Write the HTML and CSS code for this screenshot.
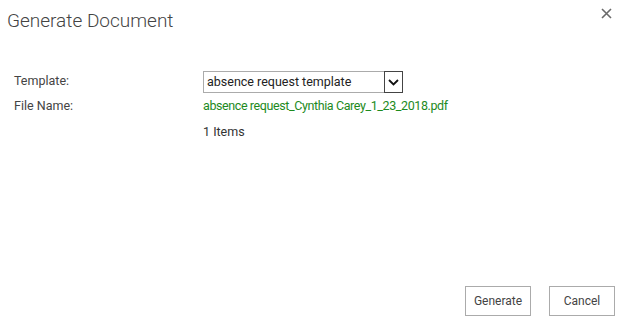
FILE: index.html
```html
<!DOCTYPE html>
<html>
<head>
<meta charset="utf-8">
<link rel="stylesheet" href="styles.css">
</head>
<body>
<div class="dialog">
  <div class="header">
    <h1 class="title">Generate Document</h1>
    <button class="close" aria-label="Close">
      <svg width="11" height="11" viewBox="0 0 11 11"><path d="M1 1 L10 10 M10 1 L1 10" stroke="#6a6a6a" stroke-width="1.6" fill="none"/></svg>
    </button>
  </div>
  <div class="form">
    <div class="label">Template:</div>
    <div class="field">
      <div class="select">
        <span class="select-text">absence request template</span>
        <span class="select-btn">
          <svg width="11" height="7" viewBox="0 0 11 7"><path d="M1 1 L5.5 5.5 L10 1" stroke="#111" stroke-width="1.8" fill="none"/></svg>
        </span>
      </div>
    </div>
    <div class="label">File Name:</div>
    <div class="field"><span class="filename">absence request_Cynthia Carey_1_23_2018.pdf</span></div>
    <div class="label"></div>
    <div class="field items">1 Items</div>
  </div>
  <div class="footer">
    <button class="btn">Generate</button>
    <button class="btn">Cancel</button>
  </div>
</div>
</body>
</html>
```
FILE: styles.css
```css
html, body {
  margin: 0;
  padding: 0;
  background: #fff;
}
body {
  font-family: "Roboto", "Open Sans", sans-serif;
  color: #444;
}
.dialog {
  height: 330px;
  display: flex;
  flex-direction: column;
  box-sizing: border-box;
}
.header {
  display: flex;
  justify-content: space-between;
  align-items: flex-start;
  padding: 8px 31px 0 7px;
}
.title {
  margin: 0;
  font-weight: 300;
  font-size: 19px;
  line-height: 26px;
  color: #444;
}
.close {
  border: 0;
  background: none;
  padding: 0;
  width: 11px;
  height: 11px;
  display: block;
}
.close svg { display: block; }
.form {
  display: grid;
  grid-template-columns: 189px auto;
  padding: 36px 0 0 14px;
  font-size: 12.5px;
}
.label {
  color: #444;
  height: 26px;
  line-height: 26px;
}
.label:first-child {
  height: 22px;
  line-height: 20px;
  margin-top: 1px;
}
.field {
  height: 26px;
  line-height: 26px;
}
.form > .field:nth-child(2) {
  height: 22px;
  margin-top: 1px;
}
.select {
  width: 200px;
  height: 22px;
  box-sizing: border-box;
  border: 1px solid #ababab;
  display: flex;
  align-items: stretch;
  line-height: 20px;
  color: #222;
}
.select-text {
  flex: 1;
  padding-left: 3px;
}
.select-btn {
  width: 17px;
  border: 1px solid #444;
  margin: -1px -1px -1px 0;
  display: flex;
  align-items: center;
  justify-content: center;
  background: #fff;
}
.select-btn svg { display: block; }
.filename {
  color: #1d8a1d;
  letter-spacing: -0.4px;
}
.items {
  color: #333;
}
.footer {
  margin-top: auto;
  display: flex;
  justify-content: flex-end;
  gap: 18px;
  padding: 0 28px 14px 0;
}
.btn {
  width: 66px;
  height: 30px;
  border: 1px solid #ababab;
  background: #fff;
  font-family: "Roboto", "Open Sans", sans-serif;
  font-size: 12px;
  color: #444;
  padding: 0;
}
```
